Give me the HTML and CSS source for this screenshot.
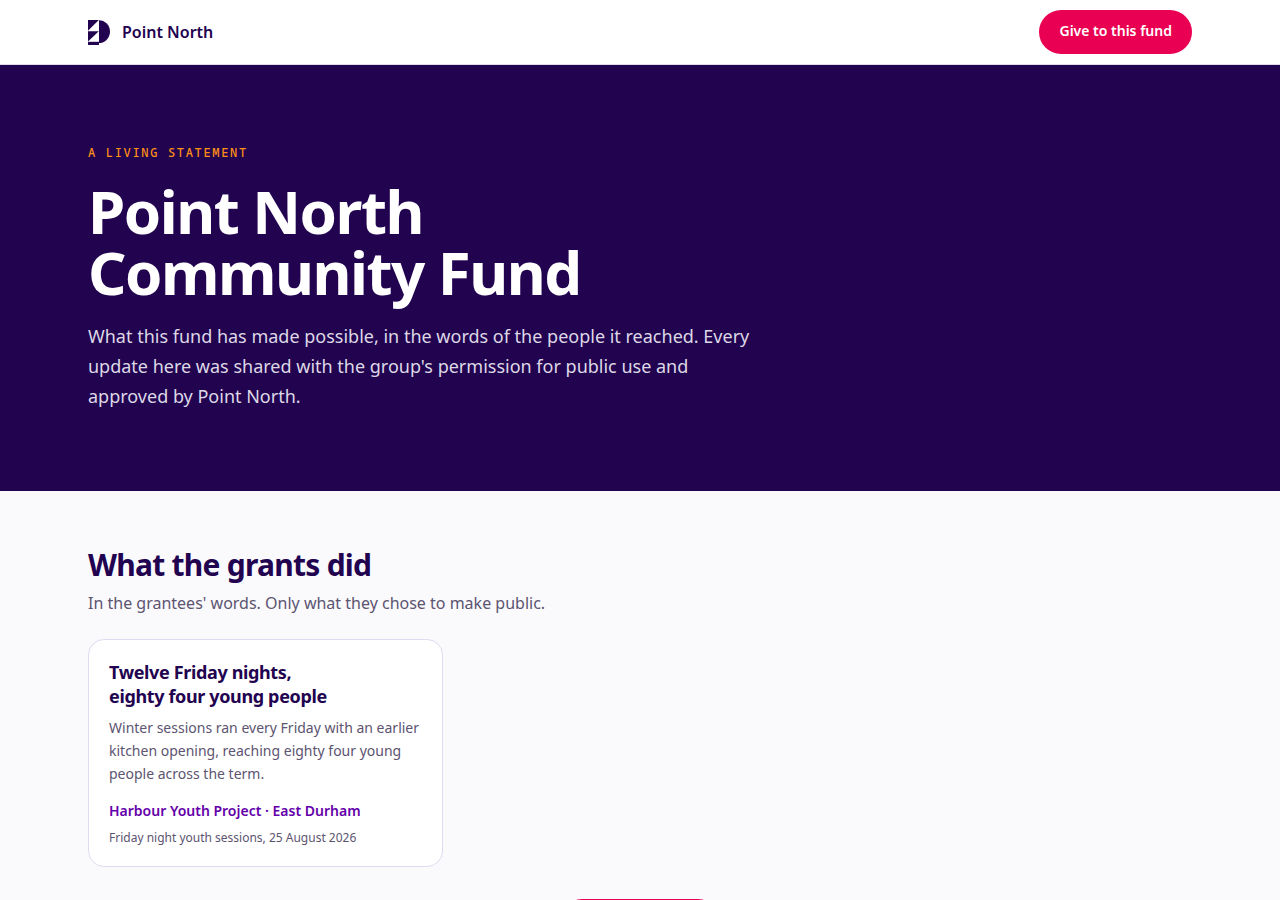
FILE: index.html
```
<!DOCTYPE html>
<html lang="en">
<head>
  <meta charset="UTF-8" />
  <meta name="viewport" content="width=device-width, initial-scale=1.0"/>
  <title>Point North Community Fund</title>
  <link rel="stylesheet" href="styles.css">
</head>
<body>

  <header class="topbar">
    <div class="wrap topbar-inner">
      <a class="brand" href="#">
        <svg class="logo" viewBox="0 0 22 26" aria-hidden="true">
          <path d="M0 1H10.8L0 11.8Z"/>
          <path d="M0 12.2H10.8L0 22.6Z"/>
          <path d="M0 22.8H11V26H0Z"/>
          <path d="M11 1.2A11 11.4 0 0 1 11 24Z"/>
        </svg>
        <span>Point North</span>
      </a>
      <button class="btn" type="button">Give to this fund</button>
    </div>
  </header>

  <section class="hero">
    <div class="wrap">
      <p class="eyebrow">A living statement</p>
      <h1>Point North<br>Community Fund</h1>
      <p class="lead">What this fund has made possible, in the words of the people it reached. Every update here was shared with the group's permission for public use and approved by Point North.</p>
    </div>
  </section>

  <main class="wrap grants">
    <h2>What the grants did</h2>
    <p class="sub">In the grantees' words. Only what they chose to make public.</p>

    <div class="cards">
      <article class="card">
        <h3>Twelve Friday nights,<br>eighty four young people</h3>
        <p class="story">Winter sessions ran every Friday with an earlier kitchen opening, reaching eighty four young people across the term.</p>
        <p class="group">Harbour Youth Project · East Durham</p>
        <p class="meta">Friday night youth sessions, 25 August 2026</p>
      </article>
    </div>

    <div class="more">
      <button class="btn btn-large" type="button">Give to this fund</button>
    </div>
  </main>

</body>
</html>
```
FILE: styles.css
```
* {
  box-sizing: border-box;
}

body {
  margin: 0;
  font-family: "Noto Sans", sans-serif;
  background-color: #fafafd;
  color: #220350;
}

h1, h2, h3, p {
  margin: 0;
}

.wrap {
  max-width: 1152px;
  margin: 0 auto;
  padding: 0 24px;
}

.topbar {
  background-color: #fff;
  border-bottom: 1px solid #dfdbed;
}

.topbar-inner {
  display: flex;
  align-items: center;
  justify-content: space-between;
  height: 64px;
}

.brand {
  display: flex;
  align-items: center;
  gap: 12px;
  color: #220350;
  font-size: 16px;
  font-weight: 600;
  text-decoration: none;
}

.logo {
  width: 22px;
  height: 26px;
  fill: #220350;
}

.btn {
  padding: 10px 20px 12px;
  border: none;
  border-radius: 22px;
  background-color: #e90052;
  color: #fff;
  font-family: inherit;
  font-size: 14px;
  font-weight: 600;
  line-height: 22px;
  cursor: pointer;
}

.btn-large {
  font-size: 15px;
}

.hero {
  padding: 80px 0;
  background-color: #220350;
  color: #fff;
}

.eyebrow {
  margin-bottom: 20px;
  color: #ff9015;
  font-family: "Noto Sans Mono", "DejaVu Sans Mono", monospace;
  font-size: 12px;
  font-weight: 500;
  line-height: 16px;
  letter-spacing: 0.14em;
  text-transform: uppercase;
}

h1 {
  font-size: 60px;
  font-weight: 700;
  line-height: 61px;
  letter-spacing: -0.025em;
}

.lead {
  max-width: 672px;
  margin-top: 18px;
  color: #ddd8e6;
  font-size: 18px;
  line-height: 30px;
}

.grants {
  padding-top: 56px;
  padding-bottom: 56px;
}

h2 {
  font-size: 30px;
  font-weight: 700;
  line-height: 36px;
  letter-spacing: -0.025em;
}

.sub {
  margin-top: 8px;
  color: #5c5470;
  font-size: 16px;
  line-height: 24px;
}

.cards {
  display: grid;
  grid-template-columns: repeat(3, 1fr);
  gap: 20px;
  margin-top: 24px;
}

.card {
  padding: 20px;
  border: 1px solid #dfdbf0;
  border-radius: 16px;
  background-color: #fff;
}

h3 {
  font-size: 18px;
  font-weight: 700;
  line-height: 24px;
  letter-spacing: -0.02em;
}

.story {
  margin-top: 8px;
  color: #5c5470;
  font-size: 14px;
  line-height: 23px;
}

.group {
  margin-top: 16px;
  color: #6400aa;
  font-size: 14px;
  font-weight: 600;
  line-height: 20px;
}

.meta {
  margin-top: 8px;
  color: #5c5470;
  font-size: 12px;
  line-height: 17px;
}

.more {
  display: flex;
  justify-content: center;
  margin-top: 32px;
}
```
